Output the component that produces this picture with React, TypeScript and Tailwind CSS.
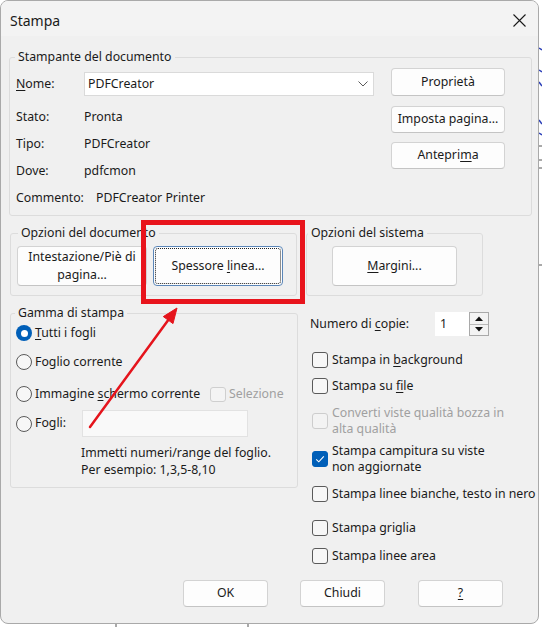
import React from "react";

const U = ({ children }: { children: React.ReactNode }) => (
  <span className="underline decoration-1 underline-offset-[2px]">{children}</span>
);

function Btn({ children, className = "" }: { children: React.ReactNode; className?: string }) {
  return (
    <div
      className={`flex items-center justify-center bg-[#fdfdfd] border border-[#d3d3d3] border-b-[#c4c4c4] rounded-[4px] text-center ${className}`}
    >
      {children}
    </div>
  );
}

function Radio({ selected = false }: { selected?: boolean }) {
  return selected ? (
    <div className="w-[16px] h-[16px] rounded-full bg-[#005fb8] flex items-center justify-center shrink-0">
      <div className="w-[7px] h-[7px] rounded-full bg-white" />
    </div>
  ) : (
    <div className="w-[16px] h-[16px] rounded-full border border-[#5a5a5a] bg-[#f7f7f7] shrink-0" />
  );
}

function Check({
  checked = false,
  disabled = false,
  children,
  className = "",
}: {
  checked?: boolean;
  disabled?: boolean;
  children: React.ReactNode;
  className?: string;
}) {
  const box = checked
    ? "bg-[#005fb8] border-[#005fb8]"
    : disabled
    ? "bg-[#f3f3f3] border-[#cdcdcd]"
    : "bg-[#f7f7f7] border-[#5a5a5a]";
  return (
    <div className={`flex items-center ${className}`}>
      <div className={`w-[16px] h-[16px] rounded-[3px] border flex items-center justify-center shrink-0 ${box}`}>
        {checked && (
          <svg width="10" height="8" viewBox="0 0 10 8">
            <path d="M1.2 4.3 L3.8 6.8 L8.8 1.3" fill="none" stroke="#ffffff" strokeWidth="1.1" />
          </svg>
        )}
      </div>
      <div className={`ml-[4px] leading-[16px] whitespace-nowrap ${disabled ? "text-[#a0a0a0]" : ""}`}>{children}</div>
    </div>
  );
}

export default function App() {
  return (
    <div className="relative w-[542px] h-[627px] overflow-hidden bg-white font-['Noto_Sans',sans-serif] text-[12.3px] text-[#1a1a1a]">
      {/* background drawing peeking behind the dialog */}
      <svg className="absolute inset-0" width="542" height="627">
        <g stroke="#2b3fb8" strokeWidth="1.5">
          <line x1="539" y1="48" x2="542" y2="50" />
          <line x1="539" y1="70" x2="542" y2="72" />
          <line x1="539" y1="82" x2="542" y2="86" />
          <line x1="539" y1="120" x2="542" y2="124" />
          <line x1="539" y1="133" x2="542" y2="135" />
        </g>
        <g stroke="#555" strokeWidth="1">
          <line x1="539" y1="146" x2="542" y2="146" />
          <line x1="539" y1="160" x2="542" y2="160" />
          <line x1="539" y1="168" x2="542" y2="168" />
          <line x1="539" y1="265" x2="542" y2="265" />
          <line x1="116" y1="624" x2="116" y2="627" />
          <line x1="248" y1="624" x2="248" y2="627" />
        </g>
      </svg>

      {/* dialog window */}
      <div className="relative w-[539px] h-[624px] bg-[#f0f0f0] border border-[#a9a9a9] rounded-[8px] overflow-hidden flex flex-col">
        {/* title bar */}
        <div className="h-[35px] shrink-0 flex items-center justify-between pl-[9px] pr-[12px] pt-[4px] bg-[#f3f3f3]">
          <span className="text-[14px] leading-[18px]">Stampa</span>
          <svg width="13" height="13" viewBox="0 0 13 13">
            <path d="M0.5 0.5 L12.5 12.5 M12.5 0.5 L0.5 12.5" stroke="#1a1a1a" strokeWidth="1.1" fill="none" />
          </svg>
        </div>

        {/* body */}
        <div className="flex flex-col pt-[13px]">
          {/* Stampante del documento */}
          <fieldset className="ml-[8px] w-[523px] border border-[#dcdcdc] rounded-[3px]">
            <legend className="ml-[5px] px-[3px] leading-[16px]">Stampante del documento</legend>
            <div className="flex pt-[3px] pl-[6px] pr-[26px] pb-[3px]">
              <div className="flex-1">
                <div className="flex items-center h-[24px] mt-[4px]">
                  <div className="w-[68px]">
                    <U>N</U>ome:
                  </div>
                  <div className="w-[290px] h-[24px] bg-white border border-[#dadada] flex items-center justify-between pl-[3px] pr-[5px]">
                    <span>PDFCreator</span>
                    <svg width="10" height="6" viewBox="0 0 10 6">
                      <path d="M0.5 0.5 L5 5 L9.5 0.5" fill="none" stroke="#5a5a5a" strokeWidth="1" />
                    </svg>
                  </div>
                </div>
                <div className="mt-[8px] flex flex-col">
                  <div className="flex items-center h-[27px]">
                    <div className="w-[68px]">Stato:</div>
                    <div>Pronta</div>
                  </div>
                  <div className="flex items-center h-[27px]">
                    <div className="w-[68px]">Tipo:</div>
                    <div>PDFCreator</div>
                  </div>
                  <div className="flex items-center h-[27px]">
                    <div className="w-[68px]">Dove:</div>
                    <div>pdfcmon</div>
                  </div>
                  <div className="flex items-center h-[27px]">
                    <div className="w-[80px]">Commento:</div>
                    <div>PDFCreator Printer</div>
                  </div>
                </div>
              </div>
              <div className="w-[114px] flex flex-col">
                <Btn className="h-[28px]">Proprietà</Btn>
                <Btn className="h-[27px] mt-[10px]">Imposta pagina...</Btn>
                <Btn className="h-[27px] mt-[9px]">
                  <span>
                    Antepri<U>m</U>a
                  </span>
                </Btn>
              </div>
            </div>
          </fieldset>

          {/* Opzioni */}
          <div className="flex mt-[9px] ml-[9px]">
            <fieldset className="w-[287px] border border-[#dcdcdc] rounded-[3px]">
              <legend className="ml-[7px] px-[3px] leading-[16px]">Opzioni del documento</legend>
              <div className="flex gap-[6px] pt-[5px] pl-[6px] pb-[9px]">
                <Btn className="w-[130px] h-[40px] leading-[18px]">
                  Intestazione/Piè di
                  <br />
                  pagina...
                </Btn>
                <div className="relative w-[130px] h-[40px] flex items-center justify-center bg-[#fdfdfd] border border-[#5b86b8] rounded-[4px]">
                  <div className="absolute inset-[1px] border border-dotted border-[#222] rounded-[3px]" />
                  <span>
                    Spessore <U>l</U>inea...
                  </span>
                </div>
              </div>
            </fieldset>
            <fieldset className="ml-[9px] w-[177px] border border-[#dcdcdc] rounded-[3px]">
              <legend className="ml-[1px] px-[3px] leading-[16px]">Opzioni del sistema</legend>
              <div className="flex justify-center pt-[5px] pb-[9px]">
                <Btn className="w-[125px] h-[40px]">
                  <span>
                    <U>M</U>argini...
                  </span>
                </Btn>
              </div>
            </fieldset>
          </div>

          {/* Gamma di stampa + opzioni a destra */}
          <div className="flex items-start mt-[9px] ml-[9px]">
            <fieldset className="w-[288px] border border-[#dcdcdc] rounded-[3px]">
              <legend className="ml-[4px] px-[3px] leading-[16px]">Gamma di stampa</legend>
              <div className="flex flex-col pl-[5px] pb-[9px]">
                <div className="flex items-center h-[24px]">
                  <Radio selected />
                  <span className="ml-[3px]">
                    <U>T</U>utti i fogli
                  </span>
                </div>
                <div className="flex items-center h-[24px] mt-[5px]">
                  <Radio />
                  <span className="ml-[3px]">Foglio corrente</span>
                </div>
                <div className="flex items-center h-[24px] mt-[8px]">
                  <div className="w-[194px] flex items-center">
                    <Radio />
                    <span className="ml-[3px] whitespace-nowrap">
                      Immagine <U>s</U>chermo corrente
                    </span>
                  </div>
                  <div className="w-[16px] h-[15px] rounded-[3px] border border-[#cfcfcf] bg-[#f4f4f4]" />
                  <span className="ml-[3px] text-[#a0a0a0]">Selezione</span>
                </div>
                <div className="flex items-center h-[27px] mt-[4px]">
                  <div className="w-[66px] flex items-center">
                    <Radio />
                    <span className="ml-[3px]">Fogli:</span>
                  </div>
                  <div className="w-[166px] h-[27px] bg-[#f9f9f9] border border-[#e2e2e2]" />
                </div>
                <div className="pl-[65px] mt-[7px] leading-[17px]">
                  Immetti numeri/range del foglio.
                  <br />
                  Per esempio: 1,3,5-8,10
                </div>
              </div>
            </fieldset>

            <div className="ml-[12px] mt-[7px] flex flex-col">
              <div className="flex items-center h-[24px]">
                <div className="w-[125px] whitespace-nowrap">
                  Numero di <U>c</U>opie:
                </div>
                <div className="w-[34px] h-[24px] bg-white flex items-center pl-[5px]">1</div>
                <div className="w-[20px] h-[24px] border border-[#a9a9a9] bg-[#f3f3f3] flex flex-col">
                  <div className="flex-1 flex items-center justify-center border-b border-[#b9b9b9]">
                    <svg width="8" height="5" viewBox="0 0 8 5">
                      <path d="M0 5 L4 0.5 L8 5 Z" fill="#111" />
                    </svg>
                  </div>
                  <div className="flex-1 flex items-center justify-center">
                    <svg width="8" height="5" viewBox="0 0 8 5">
                      <path d="M0 0 L8 0 L4 4.5 Z" fill="#111" />
                    </svg>
                  </div>
                </div>
              </div>
              <div className="ml-[2px] flex flex-col">
                <Check className="mt-[16px]">
                  Stampa in <U>b</U>ackground
                </Check>
                <Check className="mt-[10px]">
                  Stampa su <U>f</U>ile
                </Check>
                <Check disabled className="mt-[11px]">
                  Converti viste qualità bozza in
                  <br />
                  alta qualità
                </Check>
                <Check checked className="mt-[6px]">
                  Stampa campitura su viste
                  <br />
                  non aggiornate
                </Check>
                <Check className="mt-[11px]">Stampa linee bianche, testo in nero</Check>
                <Check className="mt-[18px]">Stampa griglia</Check>
                <Check className="mt-[12px]">Stampa linee area</Check>
              </div>
            </div>
          </div>

          {/* bottom buttons */}
          <div className="flex mt-[16px] ml-[182px]">
            <Btn className="w-[85px] h-[27px]">OK</Btn>
            <Btn className="w-[85px] h-[27px] ml-[32px]">Chiudi</Btn>
            <Btn className="w-[85px] h-[27px] ml-[33px]">
              <U>?</U>
            </Btn>
          </div>
        </div>
      </div>

      {/* annotation: red highlight box */}
      <div className="absolute left-[141px] top-[220px] w-[164px] h-[84px] border-[5px] border-[#e8141c]" />

      {/* annotation: red arrow */}
      <svg className="absolute inset-0 pointer-events-none" width="542" height="627">
        <line x1="90" y1="427" x2="169" y2="319" stroke="#e5141c" strokeWidth="2.5" strokeLinecap="round" />
        <path d="M177 308 L173 323.6 L163.3 316.6 Z" fill="#e5141c" stroke="#e5141c" strokeWidth="1" strokeLinejoin="round" />
      </svg>
    </div>
  );
}
